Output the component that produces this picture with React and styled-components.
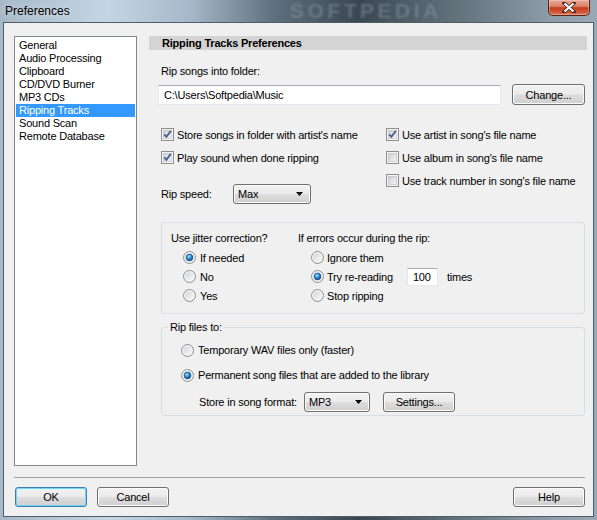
import React from "react";
import styled, { createGlobalStyle } from "styled-components";

const GlobalStyle = createGlobalStyle`
  html, body {
    margin: 0;
    padding: 0;
  }
  body {
    font-family: "Liberation Sans", Arial, sans-serif;
    font-size: 11px;
    letter-spacing: -0.2px;
    color: #000;
    background: #8ea2b2;
  }
  * {
    box-sizing: border-box;
  }
`;

const Window = styled.div`
  width: 597px;
  height: 520px;
  display: flex;
  flex-direction: column;
  overflow: hidden;
  background: linear-gradient(
    90deg,
    #a7b9c8 0%,
    #c4d6e4 18%,
    #a4b8c9 32%,
    #5e707d 46%,
    #3a4751 60%,
    #66767f 78%,
    #8d9ca8 92%,
    #9aa8b3 100%
  );
`;

const TitleBar = styled.div`
  position: relative;
  height: 22px;
  display: flex;
  align-items: flex-start;
`;

const Title = styled.span`
  padding: 4px 0 0 5px;
  font-size: 12px;
  letter-spacing: 0;
  color: #000;
  text-shadow: 0 0 6px rgba(255, 255, 255, 0.7);
`;

const Watermark = styled.span`
  position: absolute;
  left: 290px;
  top: 1px;
  line-height: 20px;
  font-size: 21px;
  font-weight: bold;
  letter-spacing: 3.5px;
  color: rgba(150, 165, 176, 0.4);
  filter: blur(0.8px);
  pointer-events: none;
`;

const CloseButton = styled.div`
  margin-left: auto;
  margin-right: 7px;
  width: 42px;
  height: 16px;
  border: 1px solid #55231a;
  border-top: none;
  border-radius: 0 0 5px 5px;
  background: linear-gradient(#e9aa98 0%, #d98369 42%, #c23d1c 52%, #cf5537 80%, #e07c5c 100%);
  box-shadow: inset 0 0 0 1px rgba(255, 230, 220, 0.35);
  display: flex;
  align-items: center;
  justify-content: center;
`;

const Frame = styled.div`
  flex: 1;
  padding: 0 3px 3px;
  display: flex;
`;

const Client = styled.div`
  flex: 1;
  background: #f0f0f0;
  border: 1px solid #505e69;
  display: flex;
  flex-direction: column;
  padding: 13px 6px 9px 10px;
`;

const MainRow = styled.div`
  display: flex;
  gap: 12px;
  height: 430px;
`;

const ListBox = styled.div`
  width: 123px;
  flex-shrink: 0;
  background: #fff;
  border: 1px solid #828790;
  padding: 2px 1px;
`;

const ListItem = styled.div`
  height: 13px;
  line-height: 13px;
  padding-left: 3px;
  white-space: nowrap;
  background: ${(p) => (p.$selected ? "#3399ff" : "transparent")};
  color: ${(p) => (p.$selected ? "#fff" : "#000")};
`;

const Panel = styled.div`
  flex: 1;
  display: flex;
  flex-direction: column;
`;

const HeaderBar = styled.div`
  height: 14px;
  line-height: 14px;
  background: #d4d4d4;
  font-weight: bold;
  padding-left: 13px;
`;

const FieldLabel = styled.div`
  margin: 15px 0 0 12px;
  line-height: 13px;
`;

const PathRow = styled.div`
  display: flex;
  align-items: center;
  gap: 11px;
  margin: 6px 0 0 9px;
`;

const TextBox = styled.div`
  width: ${(p) => p.$w}px;
  height: ${(p) => p.$h}px;
  background: #fff;
  border: 1px solid #e3e9ef;
  border-top-color: #abadb3;
  padding: 0 ${(p) => p.$pad}px;
  display: flex;
  align-items: center;
  margin-left: ${(p) => p.$ml || 0}px;
  white-space: nowrap;
`;

const Button = styled.div`
  width: ${(p) => p.$w}px;
  height: ${(p) => p.$h || 20}px;
  border: 1px solid ${(p) => (p.$default ? "#3c7fb1" : "#707070")};
  border-radius: 3px;
  background: linear-gradient(#f2f2f2 0%, #ebebeb 48%, #dddddd 52%, #cfcfcf 100%);
  box-shadow: inset 0 0 0 1px ${(p) => (p.$default ? "#6fd6f7" : "#fbfbfb")};
  display: flex;
  align-items: center;
  justify-content: center;
  margin-left: ${(p) => (p.$push ? "auto" : "0")};
  flex-shrink: 0;
`;

const Options = styled.div`
  display: flex;
  margin: 18px 0 0 12px;
`;

const OptionColumn = styled.div`
  width: ${(p) => p.$w || "auto"};
  display: flex;
  flex-direction: column;
`;

const CheckRow = styled.label`
  height: 23px;
  display: flex;
  align-items: center;
  gap: 3px;
  white-space: nowrap;
`;

const SpeedRow = styled.div`
  margin-top: 15px;
  height: 20px;
  display: flex;
  align-items: center;
`;

const InlineLabel = styled.span`
  width: ${(p) => p.$w}px;
  margin-left: ${(p) => p.$ml || 0}px;
  flex-shrink: 0;
  white-space: nowrap;
`;

const Combo = styled.div`
  width: ${(p) => p.$w}px;
  height: 20px;
  border: 1px solid #707070;
  border-radius: 3px;
  background: linear-gradient(#f2f2f2 0%, #ebebeb 48%, #dddddd 52%, #cfcfcf 100%);
  box-shadow: inset 0 0 0 1px #fbfbfb;
  display: flex;
  align-items: center;
  justify-content: space-between;
  padding: 0 6px 0 4px;
`;

const GroupBox = styled.div`
  margin: 18px 0 0 12px;
  width: 424px;
  height: 92px;
  border: 1px solid #d5dfe5;
  border-radius: 3px;
  padding: 9px 0 0 9px;
  display: flex;
`;

const GroupColumn = styled.div`
  width: ${(p) => p.$w || "auto"};
  display: flex;
  flex-direction: column;
`;

const Heading = styled.div`
  line-height: 13px;
  margin-bottom: 3px;
  white-space: nowrap;
`;

const RadioRow = styled.label`
  height: ${(p) => p.$h || 19}px;
  margin-top: ${(p) => p.$mt || 0}px;
  display: flex;
  align-items: center;
  gap: ${(p) => p.$gap || 4}px;
  padding-left: ${(p) => p.$indent || 0}px;
  white-space: nowrap;
`;

const Fieldset = styled.fieldset`
  margin: 7px 0 0 12px;
  width: 424px;
  min-width: 0;
  border: 1px solid #d5dfe5;
  border-radius: 3px;
  padding: 6px 0 3px 19px;
`;

const Legend = styled.legend`
  padding: 0 2px;
  margin-left: -13px;
  line-height: 13px;
`;

const FormatRow = styled.div`
  margin-top: 7px;
  padding-left: 18px;
  height: 20px;
  display: flex;
  align-items: center;
  gap: 13px;
`;

const Separator = styled.div`
  margin: 11px 2px 0 0;
  border-top: 1px solid #a0a0a0;
`;

const ButtonRow = styled.div`
  display: flex;
  gap: 10px;
  margin: 9px 2px 0 1px;
`;

const CheckBox = ({ checked }) => (
  <svg width="13" height="13" viewBox="0 0 13 13" style={{ flexShrink: 0 }}>
    <defs>
      <linearGradient id="cbg" x1="0" y1="0" x2="1" y2="1">
        <stop offset="0" stopColor="#cbcfd5" />
        <stop offset="1" stopColor="#f6f6f6" />
      </linearGradient>
    </defs>
    <rect x="0.5" y="0.5" width="12" height="12" fill="#f4f4f4" stroke="#8e8f8f" />
    <rect x="2.5" y="2.5" width="8" height="8" fill="url(#cbg)" stroke="#b8bcc2" strokeWidth="0.6" />
    {checked && (
      <path d="M3.2 6.4 L5.4 8.9 L9.8 2.9" fill="none" stroke="#4a5f8e" strokeWidth="1.8" />
    )}
  </svg>
);

const Radio = ({ checked }) => (
  <svg width="13" height="13" viewBox="0 0 13 13" style={{ flexShrink: 0 }}>
    <defs>
      <linearGradient id="rbg" x1="0" y1="0" x2="1" y2="1">
        <stop offset="0" stopColor="#d2d4d8" />
        <stop offset="1" stopColor="#fafafa" />
      </linearGradient>
      <radialGradient id="rdot" cx="0.4" cy="0.35" r="0.7">
        <stop offset="0" stopColor="#a6e0ff" />
        <stop offset="0.5" stopColor="#2a8ad4" />
        <stop offset="1" stopColor="#0d4a8c" />
      </radialGradient>
    </defs>
    <circle cx="6.5" cy="6.5" r="6" fill="#f2f2f2" stroke="#8e8f8f" />
    <circle cx="6.5" cy="6.5" r="4.2" fill="url(#rbg)" />
    {checked && <circle cx="6.5" cy="6.5" r="3.4" fill="url(#rdot)" stroke="#1a3f6a" strokeWidth="0.6" />}
  </svg>
);

const Arrow = () => (
  <svg width="8" height="4" viewBox="0 0 8 4">
    <path d="M0 0 H7 L3.5 4 Z" fill="#000" />
  </svg>
);

const CloseX = () => (
  <svg width="14" height="11" viewBox="0 0 14 11">
    <path d="M2 1 L12 10 M12 1 L2 10" stroke="#4a2a22" strokeWidth="3.6" strokeLinecap="square" />
    <path d="M2.5 1.5 L11.5 9.5 M11.5 1.5 L2.5 9.5" stroke="#fff" strokeWidth="2" />
  </svg>
);

const pages = [
  "General",
  "Audio Processing",
  "Clipboard",
  "CD/DVD Burner",
  "MP3 CDs",
  "Ripping Tracks",
  "Sound Scan",
  "Remote Database",
];

export default function App() {
  return (
    <>
      <GlobalStyle />
      <Window>
        <TitleBar>
          <Title>Preferences</Title>
          <Watermark>SOFTPEDIA</Watermark>
          <CloseButton>
            <CloseX />
          </CloseButton>
        </TitleBar>
        <Frame>
          <Client>
            <MainRow>
              <ListBox>
                {pages.map((p) => (
                  <ListItem key={p} $selected={p === "Ripping Tracks"}>
                    {p}
                  </ListItem>
                ))}
              </ListBox>

              <Panel>
                <HeaderBar>Ripping Tracks Preferences</HeaderBar>
                <FieldLabel>Rip songs into folder:</FieldLabel>
                <PathRow>
                  <TextBox $w={343} $h={20} $pad={5}>
                    C:\Users\Softpedia\Music
                  </TextBox>
                  <Button $w={73} $h={21}>Change...</Button>
                </PathRow>

                <Options>
                  <OptionColumn $w="225px">
                    <CheckRow>
                      <CheckBox checked />
                      Store songs in folder with artist's name
                    </CheckRow>
                    <CheckRow>
                      <CheckBox checked />
                      Play sound when done ripping
                    </CheckRow>
                    <SpeedRow>
                      <InlineLabel $w={72}>Rip speed:</InlineLabel>
                      <Combo $w={78}>
                        Max
                        <Arrow />
                      </Combo>
                    </SpeedRow>
                  </OptionColumn>
                  <OptionColumn>
                    <CheckRow>
                      <CheckBox checked />
                      Use artist in song's file name
                    </CheckRow>
                    <CheckRow>
                      <CheckBox />
                      Use album in song's file name
                    </CheckRow>
                    <CheckRow>
                      <CheckBox />
                      Use track number in song's file name
                    </CheckRow>
                  </OptionColumn>
                </Options>

                <GroupBox>
                  <GroupColumn $w="127px">
                    <Heading>Use jitter correction?</Heading>
                    <RadioRow $indent={12}>
                      <Radio checked />
                      If needed
                    </RadioRow>
                    <RadioRow $indent={12}>
                      <Radio />
                      No
                    </RadioRow>
                    <RadioRow $indent={12}>
                      <Radio />
                      Yes
                    </RadioRow>
                  </GroupColumn>
                  <GroupColumn>
                    <Heading>If errors occur during the rip:</Heading>
                    <RadioRow $indent={13} $gap={3}>
                      <Radio />
                      Ignore them
                    </RadioRow>
                    <RadioRow $indent={13} $gap={3}>
                      <Radio checked />
                      Try re-reading
                      <TextBox $w={31} $h={18} $pad={5} $ml={11}>
                        100
                      </TextBox>
                      <InlineLabel $w={40} $ml={6}>times</InlineLabel>
                    </RadioRow>
                    <RadioRow $indent={13} $gap={3}>
                      <Radio />
                      Stop ripping
                    </RadioRow>
                  </GroupColumn>
                </GroupBox>

                <Fieldset>
                  <Legend>Rip files to:</Legend>
                  <RadioRow $h={20}>
                    <Radio />
                    Temporary WAV files only (faster)
                  </RadioRow>
                  <RadioRow $h={20} $mt={5}>
                    <Radio checked />
                    Permanent song files that are added to the library
                  </RadioRow>
                  <FormatRow>
                    <InlineLabel $w={92}>Store in song format:</InlineLabel>
                    <Combo $w={66}>
                      MP3
                      <Arrow />
                    </Combo>
                    <Button $w={72}>Settings...</Button>
                  </FormatRow>
                </Fieldset>
              </Panel>
            </MainRow>

            <Separator />
            <ButtonRow>
              <Button $w={72} $default>OK</Button>
              <Button $w={72}>Cancel</Button>
              <Button $w={72} $push>Help</Button>
            </ButtonRow>
          </Client>
        </Frame>
      </Window>
    </>
  );
}
